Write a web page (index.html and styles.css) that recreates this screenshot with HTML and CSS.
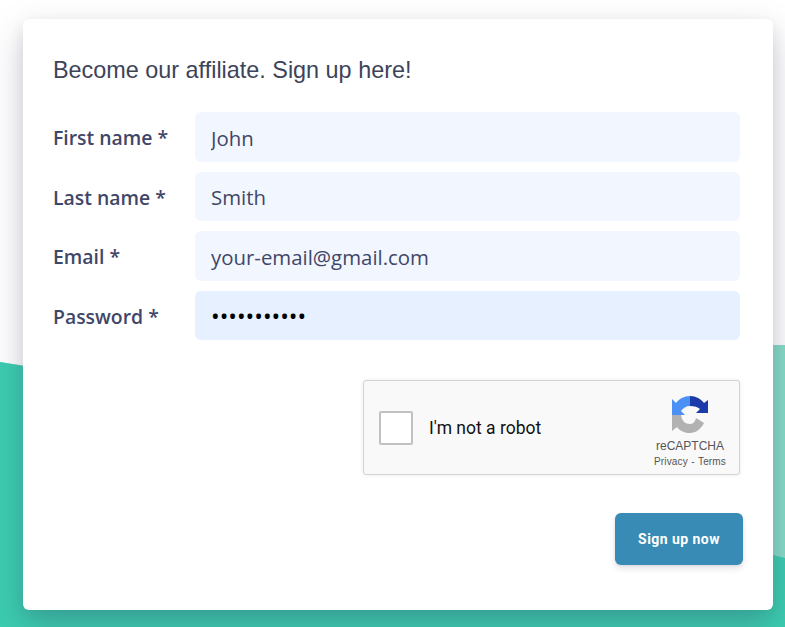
FILE: index.html
```html
<!DOCTYPE html>
<html>
<head>
	<link rel="stylesheet" href="styles.css">
</head>
<body>
	<svg class="backdrop" width="785" height="627" viewBox="0 0 785 627">
		<path fill="#88dcc8" d="M0 362 L120 380 L773 345 L785 345 L785 627 L0 627 Z"/>
		<path fill="#3ccdb0" d="M0 362 L23 366 L400 500 L773 555 L785 558 L785 627 L0 627 Z"/>
	</svg>
	<div class="page">
		<form class="card">
			<h1 class="title">Become our affiliate. Sign up here!</h1>
			<div class="row">
				<label class="label">First name *</label>
				<input class="field" type="text" value="John">
			</div>
			<div class="row">
				<label class="label">Last name *</label>
				<input class="field" type="text" value="Smith">
			</div>
			<div class="row">
				<label class="label">Email *</label>
				<input class="field" type="text" value="your-email@gmail.com">
			</div>
			<div class="row">
				<label class="label">Password *</label>
				<input class="field filled" type="password" value="abcdefghijk">
			</div>
			<div class="captcha_row">
				<div class="captcha">
					<span class="checkbox"></span>
					<span class="robot">I'm not a robot</span>
					<div class="brand">
						<svg class="logo" width="38" height="40" viewBox="0 0 38 40">
							<path fill="#4a90f5" d="M19 1 C13 1 8 4 5 8 L1 4 V20 H14 L10 16 C12 13 15 11 19 11 Z"/>
							<path fill="#1c3aa9" d="M19 1 C25 1 30 4 33 8 L37 5 V18 H25 L29 14 C27 12 23 11 19 11 Z"/>
							<path fill="#b2b2b2" d="M1 20 H10 C11 26 14 29 19 29 C22 29 24 27 25 23 L33 28 C30 34 25 38 19 38 C14 38 9 36 6 32 L1 36 Z"/>
						</svg>
						<div class="brand_name">reCAPTCHA</div>
						<div class="brand_links">Privacy - Terms</div>
					</div>
				</div>
			</div>
			<div class="actions">
				<button class="submit" type="button">Sign up now</button>
			</div>
		</form>
	</div>
</body>
</html>
```

FILE: styles.css
```css
html, body {
	margin: 0;
	height: 627px;
	overflow: hidden;
	background-color: #FFFFFF;
}
.backdrop {
	position: absolute;
	left: 0;
	top: 0;
}
.page {
	position: relative;
	padding: 19px 12px 0 23px;
}
.card {
	box-sizing: border-box;
	width: 750px;
	height: 591px;
	padding: 36px 33px 0 30px;
	background-color: #FFFFFF;
	border-radius: 6px;
	box-shadow: 0 15px 35px rgba(50, 50, 93, 0.25), 0 5px 15px rgba(0, 0, 0, 0.07);
}
.title {
	margin: 0 0 27px 0;
	color: #3D4459;
	font-family: "Liberation Sans", sans-serif;
	font-size: 23.4px;
	font-weight: normal;
	line-height: 30px;
}
.row {
	display: flex;
	align-items: center;
	margin-bottom: 10px;
}
.label {
	width: 142px;
	padding-top: 2px;
	color: #3F4768;
	font-family: "Open Sans", sans-serif;
	font-size: 19.4px;
	font-weight: 600;
}
.field {
	box-sizing: border-box;
	width: 545px;
	height: 49.5px;
	padding: 2px 16px 0 16px;
	background-color: #F2F6FE;
	border: none;
	border-radius: 6px;
	color: #3F4768;
	font-family: "Open Sans", sans-serif;
	font-size: 20.4px;
}
.field.filled {
	padding-top: 1px;
	background-color: #E6F0FE;
	color: #000000;
	font-size: 23px;
}
.captcha_row {
	display: flex;
	justify-content: flex-end;
	margin-top: 40px;
}
.captcha {
	box-sizing: border-box;
	display: flex;
	align-items: center;
	width: 377px;
	height: 95px;
	padding-left: 15px;
	background-color: #F9F9F9;
	border: 1px solid #D3D3D3;
	border-radius: 3px;
	box-shadow: 0 0 4px rgba(0, 0, 0, 0.08);
}
.checkbox {
	box-sizing: border-box;
	width: 34px;
	height: 34px;
	background-color: #FFFFFF;
	border: 2px solid #C1C1C1;
	border-radius: 2px;
}
.robot {
	margin-left: 16px;
	color: #111111;
	font-family: Roboto, sans-serif;
	font-size: 17.5px;
}
.brand {
	display: flex;
	flex-direction: column;
	align-items: center;
	margin-left: auto;
	margin-right: 4px;
	width: 90px;
	padding-top: 4px;
	font-family: "Liberation Sans", sans-serif;
}
.logo {
	margin-top: 2px;
}
.brand_name {
	margin-top: 4px;
	color: #555555;
	font-size: 12px;
}
.brand_links {
	margin-top: 3px;
	color: #555555;
	font-size: 10px;
	letter-spacing: 0.15px;
	word-spacing: 0.5px;
}
.actions {
	display: flex;
	justify-content: flex-end;
	margin: 38px -3px 0 0;
}
.submit {
	width: 128px;
	height: 52px;
	background-color: #378BB4;
	border: none;
	border-radius: 6px;
	box-shadow: 0 4px 6px rgba(50, 50, 93, 0.11), 0 1px 3px rgba(0, 0, 0, 0.08);
	color: #FFFFFF;
	font-family: Roboto, sans-serif;
	font-size: 14px;
	font-weight: bold;
	letter-spacing: 0.45px;
}
```
